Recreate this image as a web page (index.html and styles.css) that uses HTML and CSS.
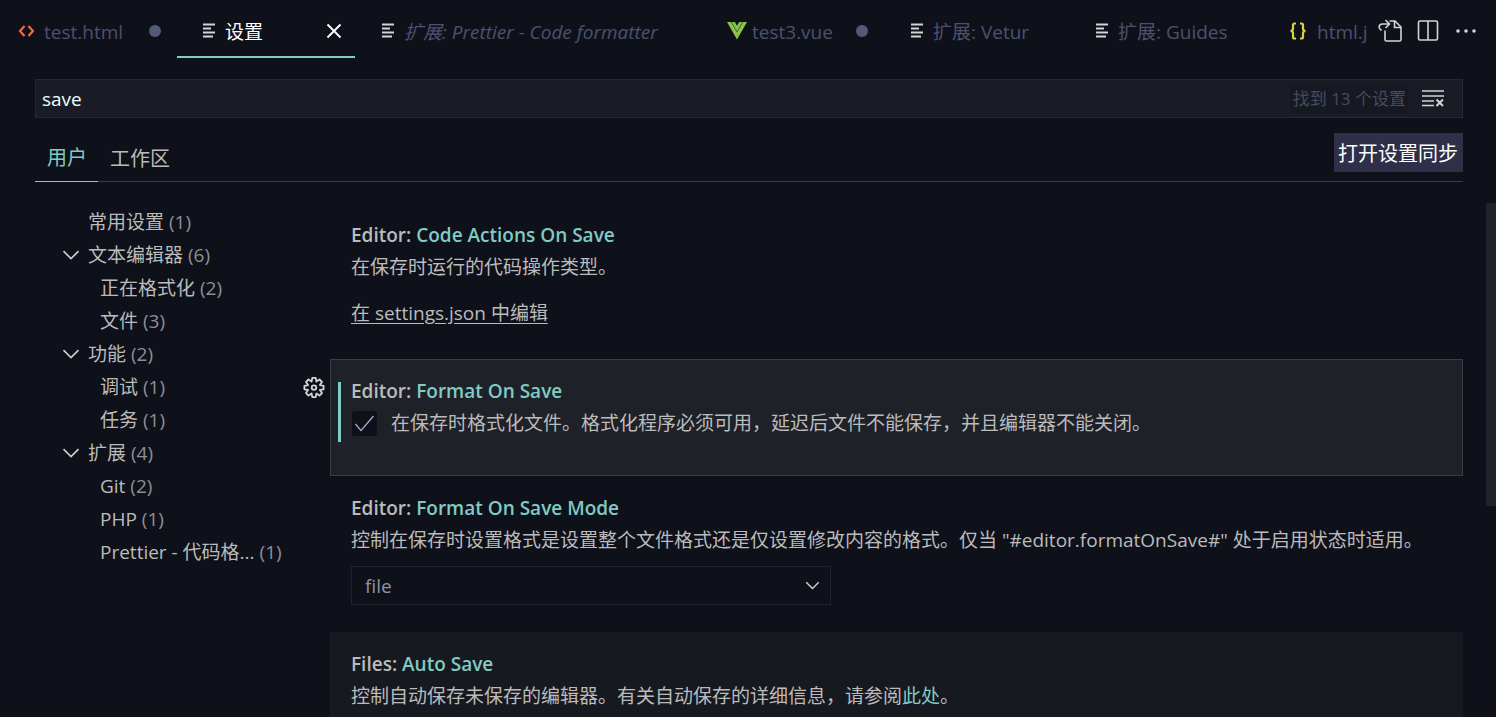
FILE: index.html
```html
<!DOCTYPE html>
<html lang="zh-CN">
<head>
<meta charset="utf-8">
<title>设置</title>
<link rel="stylesheet" href="styles.css">
</head>
<body>
<svg class="sprite" aria-hidden="true">
  <symbol id="lines" viewBox="0 0 16 16"><path d="M2 2h12M2 6h8M2 10h12M2 14h10" transform="translate(0 -.5)" stroke="currentColor" stroke-width="1.9"/></symbol>
  <symbol id="chevron" viewBox="0 0 18 10"><path d="M1.500 1.200 9 8.600l7.500-7.400" fill="none" stroke="currentColor" stroke-width="1.700"/></symbol>
</svg>
<header class="tabbar">
  <nav class="tabs">
    <div class="tab">
      <svg class="tab-icon orange" viewBox="0 0 18 18"><path d="M6.500 4 2 9l4.500 5M10.500 4 15 9l-4.500 5" fill="none" stroke="currentColor" stroke-width="2.100"/></svg>
      <span class="tab-name">test.html</span><span class="tab-end"><i class="dot"></i></span>
    </div>
    <div class="tab active">
      <svg class="tab-icon"><use href="#lines"/></svg>
      <span class="tab-name">设置</span>
      <button class="tab-end" aria-label="关闭"><svg width="16" height="16" viewBox="0 0 16 16"><path d="M1.500 1.500l13 13M14.500 1.500l-13 13" stroke="currentColor" stroke-width="1.900"/></svg></button>
    </div>
    <div class="tab">
      <svg class="tab-icon"><use href="#lines"/></svg>
      <span class="tab-name preview">扩展: Prettier - Code formatter</span>
    </div>
    <div class="tab">
      <svg class="tab-icon vue" viewBox="0 0 20 18"><path d="M0 0h4l6 10.500L16 0h4L10 17.500z" fill="#8bc34a"/><path d="M4 0h3.700L10 4l2.300-4H16l-6 10.500z" fill="#4f8a3c"/><path d="M5 0h2.700L10 4l2.300-4H15l-5 8.800z" fill="#8bc34a"/></svg>
      <span class="tab-name">test3.vue</span><span class="tab-end"><i class="dot"></i></span>
    </div>
    <div class="tab">
      <svg class="tab-icon"><use href="#lines"/></svg>
      <span class="tab-name">扩展: Vetur</span>
    </div>
    <div class="tab">
      <svg class="tab-icon"><use href="#lines"/></svg>
      <span class="tab-name">扩展: Guides</span>
    </div>
    <div class="tab">
      <svg class="tab-icon yellow" viewBox="0 0 18 18"><path d="M7 1.500H5.500Q4 1.500 4 3v3.500Q4 9 1.500 9 4 9 4 11.500V15q0 1.500 1.500 1.500H7M11 1.500h1.500Q14 1.500 14 3v3.500Q14 9 16.500 9 14 9 14 11.500V15q0 1.500-1.500 1.500H11" fill="none" stroke="currentColor" stroke-width="2.200"/></svg>
      <span class="tab-name">html.j</span>
    </div>
  </nav>
  <div class="actions">
    <button aria-label="打开设置 (json)"><svg width="24" height="24" viewBox="0 0 24 24" fill="none" stroke="currentColor" stroke-width="1.600"><path d="M7 11.500V20.500Q7 22 8.500 22h13Q23 22 23 20.500V8l-6-6h-5.500M16.500 2v6.500H23"/><path d="M3.500 11.500C0 9.500.500 5 4.500 5H11M7.500 1l4 4-4 4"/></svg></button>
    <button aria-label="向右拆分编辑器"><svg width="24" height="24" viewBox="0 0 24 24" fill="none" stroke="currentColor" stroke-width="1.600"><rect x="2.500" y="2" width="19" height="19" rx="1.500"/><path d="M12 2v19"/></svg></button>
    <button aria-label="更多操作"><svg width="24" height="24" viewBox="0 0 24 24" fill="currentColor"><circle cx="4" cy="12" r="1.800"/><circle cx="12" cy="12" r="1.800"/><circle cx="20" cy="12" r="1.800"/></svg></button>
  </div>
</header>

<main class="editor">
  <div class="search">
    <input class="search-input" type="text" value="save" aria-label="搜索设置">
    <span class="count">找到 13 个设置</span>
    <button class="clear" aria-label="清除搜索"><svg width="24" height="20" viewBox="0 0 24 20" fill="none" stroke="currentColor" stroke-width="1.700"><path d="M1 2h22M1 7h22M1 12h12M1 16.500h12"/><path d="M15.500 10.500l6.500 6.500M22 10.500l-6.500 6.500" stroke-width="2"/></svg></button>
  </div>
  <div class="scopes">
    <button class="scope current">用户</button>
    <button class="scope">工作区</button>
    <button class="sync">打开设置同步</button>
  </div>
  <div class="columns">
    <ul class="tree">
      <li><span class="twist"></span>常用设置 <em>(1)</em></li>
      <li><span class="twist"><svg><use href="#chevron"/></svg></span>文本编辑器 <em>(6)</em></li>
      <li class="child">正在格式化 <em>(2)</em></li>
      <li class="child">文件 <em>(3)</em></li>
      <li><span class="twist"><svg><use href="#chevron"/></svg></span>功能 <em>(2)</em></li>
      <li class="child">调试 <em>(1)</em></li>
      <li class="child">任务 <em>(1)</em></li>
      <li><span class="twist"><svg><use href="#chevron"/></svg></span>扩展 <em>(4)</em></li>
      <li class="child">Git <em>(2)</em></li>
      <li class="child">PHP <em>(1)</em></li>
      <li class="child">Prettier - 代码格... <em>(1)</em></li>
    </ul>
    <div class="settings">
      <section class="item">
        <h3>Editor: <b>Code Actions On Save</b></h3>
        <p>在保存时运行的代码操作类型。</p>
        <a class="edit-link" href="#">在 settings.json 中编辑</a>
      </section>
      <section class="item focused">
        <button class="gear" aria-label="更多操作"><svg width="24" height="24" viewBox="0 0 24 24" fill="none" stroke="currentColor" stroke-width="1.800" stroke-linejoin="round"><path d="M10.300.9h3.400l.7 3.700 3.100-2.100 2.500 2.500-2.100 3.100 3.700.7v3.500l-3.700.7 2.100 3.100-2.500 2.500-3.100-2.100-.7 3.700h-3.400l-.7-3.700-3.100 2.100L4 16.100 6.100 13l-3.700-.7V8.800l3.700-.7L4 5l2.500-2.500 3.100 2.100z"/><circle cx="12" cy="10.600" r="2.300"/></svg></button>
        <h3>Editor: <b>Format On Save</b></h3>
        <div class="check-row">
          <input type="checkbox" id="format-on-save" checked>
          <label for="format-on-save">在保存时格式化文件。格式化程序必须可用，延迟后文件不能保存，并且编辑器不能关闭。</label>
        </div>
      </section>
      <section class="item">
        <h3>Editor: <b>Format On Save Mode</b></h3>
        <p id="mode-description">控制在保存时设置格式是设置整个文件格式还是仅设置修改内容的格式。仅当 "#editor.formatOnSave#" 处于启用状态时适用。</p>
        <div class="select-box">
          <select aria-labelledby="mode-description"><option>file</option></select>
          <svg><use href="#chevron"/></svg>
        </div>
      </section>
      <section class="item shaded">
        <h3>Files: <b>Auto Save</b></h3>
        <p>控制自动保存未保存的编辑器。有关自动保存的详细信息，请参阅<a href="#">此处</a>。</p>
      </section>
    </div>
  </div>
  <div class="scroll-thumb"></div>
</main>
</body>
</html>
```
FILE: styles.css
```css
* { box-sizing: border-box; }

body {
  margin: 0;
  height: 100vh;
  overflow: hidden;
  display: flex;
  flex-direction: column;
  background: #0f111a;
  color: #bbbbbb;
  font: 19px/32px "Open Sans", "Noto Sans CJK SC", sans-serif;
}

button, input, select { font: inherit; color: inherit; }
button { border: 0; padding: 0; background: none; }
.sprite { display: none; }

/* Editor tabs */
.tabbar { display: flex; height: 58px; flex: none; }
.tabs {
  flex: 1;
  min-width: 0;
  overflow: hidden;
  display: grid;
  grid-template-columns: 177px 178px 349px 180px 185px 200px 1fr;
}
.tab {
  display: flex;
  align-items: center;
  min-width: 0;
  padding: 6px 0 0 24px;
  border-bottom: 2px solid transparent;
  color: #4b526d;
  white-space: nowrap;
}
.tab:first-child { padding-left: 18px; }
.tab:nth-child(n+3) { padding-left: 25px; }
.tab:nth-child(4) { padding-left: 23px; }
.tab:last-child { padding-left: 20px; }
.tab.active { border-color: #80cbc4; color: #ffffff; }
.tab-name { padding-top: 2px; }
.tab-icon { width: 16px; height: 16px; flex: none; margin-right: 8px; color: #d4d4d4; }
.tab-icon.orange { width: 18px; height: 18px; color: #f4703a; }
.tab-icon.yellow { width: 18px; height: 18px; margin-right: 10px; color: #d3d63c; }
.tab-icon.vue { width: 20px; height: 18px; margin-right: 5px; }
.preview { font-style: italic; }
.tab-end { display: grid; place-items: center; width: 44px; height: 32px; margin-left: auto; }
.active .tab-end { width: 42px; }
.dot { width: 12px; height: 12px; border-radius: 50%; background: #535a77; }
.actions { display: flex; align-items: center; gap: 14px; padding: 4px 18px 0 11px; color: #d4d4d4; }
.actions button { display: grid; }

/* Search and scope */
.editor {
  position: relative;
  flex: 1;
  min-height: 0;
  display: flex;
  flex-direction: column;
  padding: 21px 33px 0 35px;
}
.search {
  display: flex;
  align-items: center;
  height: 39px;
  flex: none;
  border: 1px solid #262931;
  background: #1a1c25;
}
.search-input {
  flex: 1;
  min-width: 0;
  padding: 0 6px;
  border: 0;
  outline: 0;
  background: none;
  color: #eeffff;
  font-weight: 500;
}
.count { padding: 0 3px; border-radius: 3px; background: #171922; color: #464b5d; line-height: 28px; font-size: 17px; }
.clear { display: grid; margin: 0 17px 0 12px; color: #d4d4d4; }
.scopes {
  display: flex;
  flex: none;
  height: 49px;
  margin-top: 15px;
  border-bottom: 1px solid #3b3d42;
}
.scope { height: 49px; padding: 2px 11px 0 12px; font-size: 20px; }
.scope.current { border-bottom: 1px solid #80cbc4; color: #80cbc4; }
.sync { height: 39px; margin-left: auto; padding: 2px 5px 0 4px; background: #2d3048; color: #ffffff; font-size: 20px; }

/* Contents tree and list of settings */
.columns { display: flex; flex: 1; min-height: 0; margin-top: 21px; }
.tree { width: 295px; flex: none; margin: 0; padding: 2px 0 0 27px; list-style: none; }
.tree li { display: flex; align-items: center; height: 33px; white-space: pre; }
.tree .child { padding-left: 38px; }
.tree em { color: #8e8f93; font-style: normal; }
.twist { width: 26px; }
.twist svg { display: block; width: 18px; height: 10px; color: #cccccc; }
.settings { flex: 1; min-width: 0; }
.item { position: relative; padding: 16px 20px 27px 21px; }
.item h3, .item p { margin: 0; font-size: 19px; }
.item h3 { font-weight: 600; }
.item b { color: #80cbc4; font-weight: 600; }
.item p a { color: #80cbc4; text-decoration: none; }
.edit-link { display: inline-block; margin: 14px 0 3px; color: inherit; text-underline-offset: 3px; }
.focused { padding: 15px 20px 36px 20px; border: 1px solid #3b3d42; background: #1f2129; }
.focused::before {
  content: "";
  position: absolute;
  left: 7px;
  top: 22px;
  width: 3px;
  height: 60px;
  background: #80cbc4;
}
.gear { position: absolute; left: -29px; top: 17px; display: grid; color: #d4d4d4; }
.check-row { display: flex; align-items: center; gap: 14px; padding-left: 1px; }
.check-row input {
  appearance: none;
  width: 25px;
  height: 25px;
  flex: none;
  margin: 0;
  border-radius: 3px;
  background: #0f111a;
}
.check-row input:checked::after {
  content: "";
  display: block;
  width: 25px;
  height: 25px;
  background: #a6accd;
  clip-path: polygon(3px 14px, 4px 13px, 9px 19px, 21px 5px, 22px 6px, 9px 21px);
}
.select-box { position: relative; max-width: 480px; margin-top: 10px; }
.select-box select {
  appearance: none;
  display: block;
  width: 100%;
  height: 39px;
  padding: 0 13px;
  border: 1px solid #1f222b;
  border-radius: 0;
  background: #0f111a;
  color: #8f93a2;
}
.select-box svg { position: absolute; right: 11px; top: 15px; width: 15px; height: 9px; color: #d4d4d4; pointer-events: none; }
.shaded { background: #171921; }
.scroll-thumb { position: absolute; right: 0; top: 145px; width: 10px; height: 303px; background: #21232b; }
```
